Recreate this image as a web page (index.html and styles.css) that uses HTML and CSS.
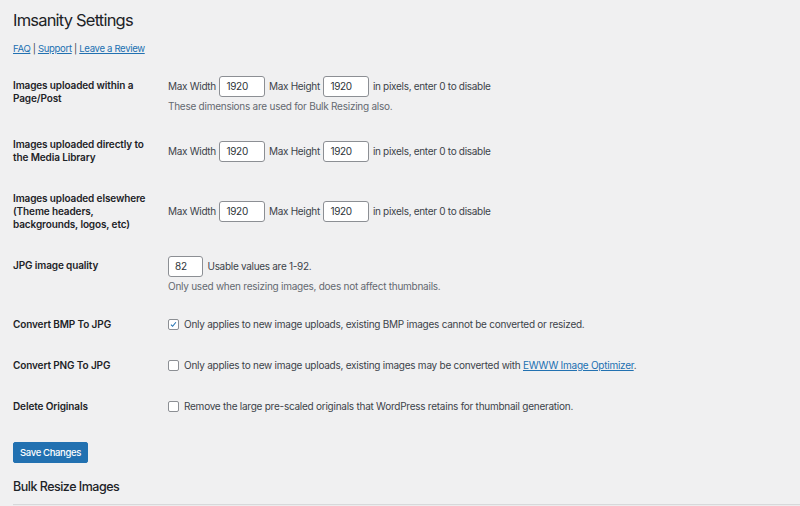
FILE: index.html
```html
<!DOCTYPE html>
<html lang="en">
<head>
<meta charset="utf-8">
<title>Imsanity Settings</title>
<link rel="stylesheet" href="styles.css">
</head>
<body>
<div class="wrap">
  <h1 class="title">Imsanity Settings</h1>
  <p class="links"><a href="#">FAQ</a> | <a href="#">Support</a> | <a href="#">Leave a Review</a></p>

  <div class="form-table">
    <div class="row">
      <div class="th">Images uploaded within a Page/Post</div>
      <div class="td">
        <div class="line">
          <span>Max Width</span><span class="input w">1920</span><span>Max Height</span><span class="input w">1920</span><span>in pixels, enter 0 to disable</span>
        </div>
        <p class="description">These dimensions are used for Bulk Resizing also.</p>
      </div>
    </div>
    <div class="row">
      <div class="th">Images uploaded directly to the Media Library</div>
      <div class="td">
        <div class="line">
          <span>Max Width</span><span class="input w">1920</span><span>Max Height</span><span class="input w">1920</span><span>in pixels, enter 0 to disable</span>
        </div>
      </div>
    </div>
    <div class="row">
      <div class="th">Images uploaded elsewhere (Theme headers, backgrounds, logos, etc)</div>
      <div class="td">
        <div class="line">
          <span>Max Width</span><span class="input w">1920</span><span>Max Height</span><span class="input w">1920</span><span>in pixels, enter 0 to disable</span>
        </div>
      </div>
    </div>
    <div class="row">
      <div class="th">JPG image quality</div>
      <div class="td">
        <div class="line">
          <span class="input q">82</span><span>Usable values are 1-92.</span>
        </div>
        <p class="description">Only used when resizing images, does not affect thumbnails.</p>
      </div>
    </div>
    <div class="row">
      <div class="th">Convert BMP To JPG</div>
      <div class="td">
        <label class="check-line"><span class="checkbox checked"><svg viewBox="0 0 12 12" width="11" height="11"><polyline points="2.6,6.2 4.8,8.4 9.2,3" fill="none" stroke="#2271b1" stroke-width="1.4"/></svg></span><span>Only applies to new image uploads, existing BMP images cannot be converted or resized.</span></label>
      </div>
    </div>
    <div class="row">
      <div class="th">Convert PNG To JPG</div>
      <div class="td">
        <label class="check-line"><span class="checkbox"></span><span>Only applies to new image uploads, existing images may be converted with <a href="#">EWWW Image Optimizer</a>.</span></label>
      </div>
    </div>
    <div class="row">
      <div class="th">Delete Originals</div>
      <div class="td">
        <label class="check-line"><span class="checkbox"></span><span>Remove the large pre-scaled originals that WordPress retains for thumbnail generation.</span></label>
      </div>
    </div>
  </div>

  <p class="submit"><button class="button-primary">Save Changes</button></p>

  <h2 class="subtitle">Bulk Resize Images</h2>
  <div class="panel"></div>
</div>
</body>
</html>
```

FILE: styles.css
```css
* { box-sizing: border-box; }
html, body { margin: 0; padding: 0; }
body {
  background: #f0f0f1;
  color: #3c434a;
  font-family: Inter, "Noto Sans", "Liberation Sans", sans-serif;
  font-size: 10px;
  line-height: 13px;
  letter-spacing: -0.25px;
  width: 800px;
  height: 506px;
  overflow: hidden;
}
.wrap { padding: 10px 0 0 13px; }
.title {
  margin: 0;
  font-size: 16.5px;
  font-weight: 400;
  line-height: 20px;
  letter-spacing: -0.8px;
  color: #1d2327;
}
.links {
  margin: 12px 0 0;
  line-height: 13px;
  font-size: 9.6px;
  letter-spacing: -0.35px;
}
a { color: #2271b1; text-decoration: underline; }
.form-table { margin-top: 10px; }
.row {
  display: grid;
  grid-template-columns: 155px 1fr;
}
.th {
  padding: 14px 10px 14px 0;
  font-weight: 600;
  color: #1d2327;
  line-height: 13px;
  letter-spacing: -0.12px;
  align-self: start;
}
.td {
  padding: 11px 0;
  align-self: center;
}
.line {
  display: flex;
  align-items: center;
  gap: 3.5px;
  letter-spacing: -0.3px;
}
.input {
  display: inline-flex;
  align-items: center;
  height: 21px;
  background: #fff;
  border: 1px solid #8c8f94;
  border-radius: 3px;
  padding: 0 6px;
  color: #2c3338;
}
.input.w { width: 46px; }
.input.q { width: 35px; margin-right: 1px; }
.description {
  margin: 3px 0 0;
  color: #646970;
}
.check-line {
  display: flex;
  align-items: center;
  gap: 5px;
}
.checkbox {
  width: 11px;
  height: 11px;
  border: 1px solid #8c8f94;
  border-radius: 2px;
  background: #fff;
  display: inline-flex;
  align-items: center;
  justify-content: center;
  flex: none;
}
.checkbox svg { display: block; }
.submit { margin: 15px 0 0; line-height: 0; }
.button-primary {
  display: inline-block;
  height: 21px;
  width: 75px;
  padding: 0;
  background: #2271b1;
  border: 1px solid #2271b1;
  border-radius: 2px;
  color: #fff;
  font-family: inherit;
  font-size: 9.5px;
  font-weight: 500;
  letter-spacing: -0.35px;
  line-height: 19px;
}
.subtitle {
  margin: 16px 0 0;
  font-size: 12.5px;
  font-weight: 500;
  line-height: 16px;
  letter-spacing: -0.5px;
  color: #1d2327;
}
.panel {
  margin-top: 9px;
  height: 20px;
  border-top: 1px solid #d7d8da;
  background: #ececed;
}
```
